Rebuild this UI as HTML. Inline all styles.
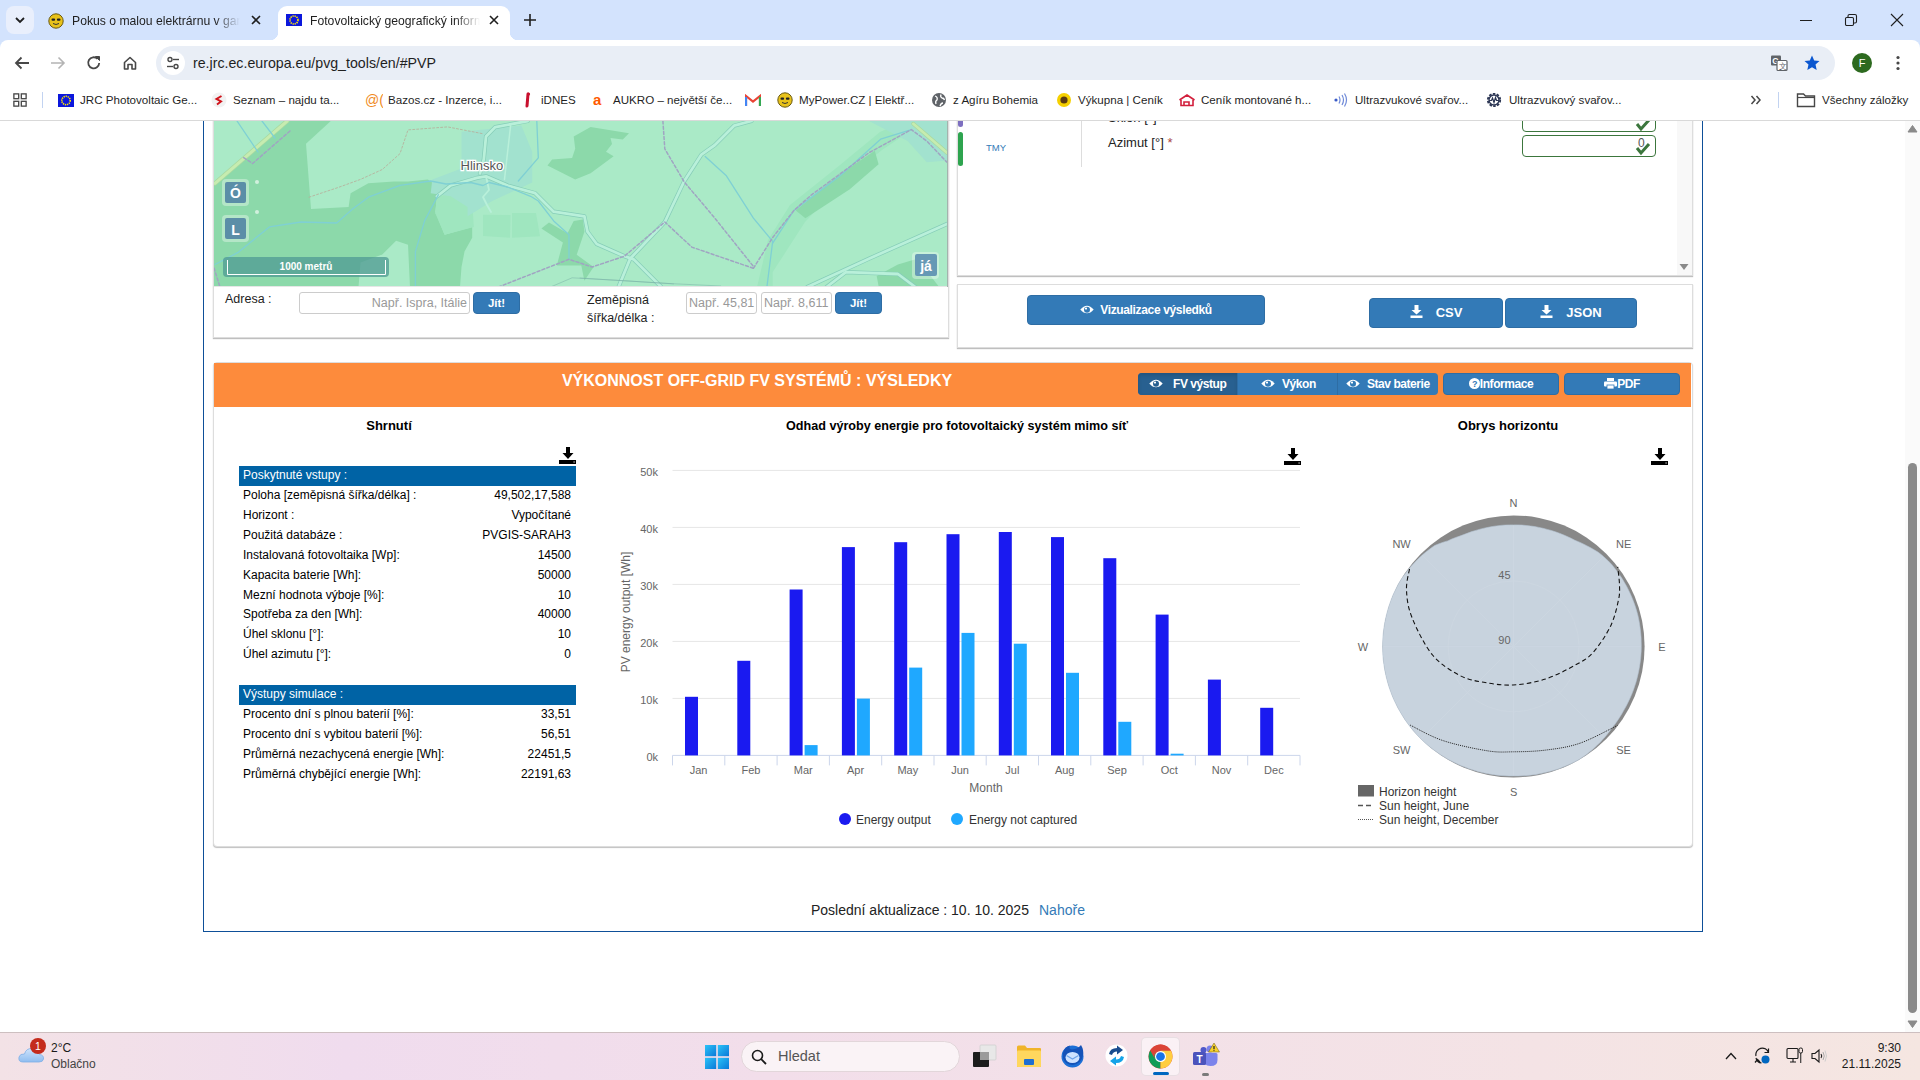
<!DOCTYPE html>
<html><head><meta charset="utf-8">
<style>
*{box-sizing:border-box;margin:0;padding:0}
html,body{width:1920px;height:1080px;overflow:hidden;background:#fff;font-family:"Liberation Sans",sans-serif;color:#000}
.a{position:absolute}
.nw{white-space:nowrap}
/* chrome */
#tabs{left:0;top:0;width:1920px;height:48px;background:#d3e3fd}
#toolbar{left:0;top:40px;width:1920px;height:40px;background:#fff;border-radius:8px 8px 0 0}
#bm{left:0;top:80px;width:1920px;height:41px;background:#fff;border-bottom:1px solid #d9d9d9}
#web{left:0;top:121px;width:1920px;height:911px;background:#fff;overflow:hidden}
#taskbar{left:0;top:1032px;width:1920px;height:48px;background:linear-gradient(90deg,#f3e2e6 0%,#f0dcee 18%,#f2deea 40%,#f3e1e8 60%,#f4e3e5 80%,#f5e6e1 100%);border-top:1px solid #cdbfc0}
.bmi{top:0;height:40px;font-size:11.6px;line-height:40px;color:#1f1f1f}
.panel{background:#fff;border:1px solid #ddd;box-shadow:0 1px 1px rgba(0,0,0,.25)}
.btn{background:#337ab7;border:1px solid #2e6da4;border-radius:4px;color:#fff;text-align:center}
.trow{left:0;width:337px;height:20px;font-size:12px;line-height:20px}
.trow .k{position:absolute;left:4px;top:-1px}
.trow .v{position:absolute;right:5px;top:-1px}
.thead{left:0;width:337px;height:20px;background:#0063a5;color:#fff;font-size:12px;line-height:18px;padding-left:4px}
.ax{font-size:11px;color:#666}
</style></head><body>
<div id="tabs" class="a">
 <div class="a" style="left:6px;top:6px;width:28px;height:28px;border-radius:8px;background:#e9effc"></div>
 <svg class="a" style="left:14px;top:14px" width="12" height="12" viewBox="0 0 12 12"><path d="M2 4 L6 8 L10 4" fill="none" stroke="#1f1f1f" stroke-width="1.8"/></svg>
 <svg class="a" style="left:48px;top:13px" width="16" height="16" viewBox="0 0 16 16"><circle cx="8" cy="8" r="7.2" fill="#e8c21a" stroke="#6b5a10" stroke-width="1"/><rect x="3.5" y="5.5" width="3.6" height="2.2" rx="1" fill="#222"/><rect x="8.9" y="5.5" width="3.6" height="2.2" rx="1" fill="#222"/><path d="M5 10.5 Q8 12.5 11 10.5" fill="none" stroke="#333" stroke-width="1"/></svg>
 <div class="a nw" style="left:72px;top:13px;font-size:12.2px;line-height:17px;color:#1f1f1f;width:168px;overflow:hidden;-webkit-mask-image:linear-gradient(90deg,#000 85%,transparent)">Pokus o malou elektrárnu v garáži</div>
 <svg class="a" style="left:250px;top:14px" width="12" height="12" viewBox="0 0 12 12"><path d="M2 2 L10 10 M10 2 L2 10" stroke="#1f1f1f" stroke-width="1.6"/></svg>
 <div class="a" style="left:278px;top:6px;width:232px;height:34px;background:#fff;border-radius:9px 9px 0 0"></div>
 <div class="a" style="left:270px;top:32px;width:8px;height:8px;background:radial-gradient(circle at 0 0,#d3e3fd 8px,#fff 8.5px)"></div>
 <div class="a" style="left:510px;top:32px;width:8px;height:8px;background:radial-gradient(circle at 8px 0,#d3e3fd 8px,#fff 8.5px)"></div>
 <svg class="a" style="left:286px;top:14px" width="16" height="12" viewBox="0 0 16 12"><rect width="16" height="12" fill="#0b17dc"/><circle cx="8" cy="6" r="4" fill="none" stroke="#ffe800" stroke-width="1.6" stroke-dasharray="1.3 0.8"/></svg>
 <div class="a nw" style="left:310px;top:13px;font-size:12.2px;line-height:17px;color:#1f1f1f;width:170px;overflow:hidden;-webkit-mask-image:linear-gradient(90deg,#000 85%,transparent)">Fotovoltaický geografický informační systém</div>
 <svg class="a" style="left:488px;top:14px" width="12" height="12" viewBox="0 0 12 12"><path d="M2 2 L10 10 M10 2 L2 10" stroke="#1f1f1f" stroke-width="1.6"/></svg>
 <svg class="a" style="left:523px;top:13px" width="14" height="14" viewBox="0 0 14 14"><path d="M7 1 V13 M1 7 H13" stroke="#1f1f1f" stroke-width="1.6"/></svg>
 <svg class="a" style="left:1799px;top:14px" width="14" height="14" viewBox="0 0 14 14"><path d="M1 6.5 H13" stroke="#1f1f1f" stroke-width="1"/></svg>
 <svg class="a" style="left:1844px;top:13px" width="14" height="14" viewBox="0 0 14 14"><rect x="1.5" y="4.5" width="8" height="8" rx="1.2" fill="none" stroke="#1f1f1f" stroke-width="1.1"/><path d="M4 4.5 V3 Q4 1.5 5.5 1.5 H11 Q12.5 1.5 12.5 3 V8.5 Q12.5 10 11 10 H9.5" fill="none" stroke="#1f1f1f" stroke-width="1.1"/></svg>
 <svg class="a" style="left:1890px;top:13px" width="14" height="14" viewBox="0 0 14 14"><path d="M1 1 L13 13 M13 1 L1 13" stroke="#1f1f1f" stroke-width="1.1"/></svg>
</div>
<div id="toolbar" class="a">
 <svg class="a" style="left:13px;top:15px" width="18" height="16" viewBox="0 0 18 16"><path d="M16 8 H3 M8.5 2.5 L3 8 L8.5 13.5" fill="none" stroke="#474747" stroke-width="1.8"/></svg>
 <svg class="a" style="left:49px;top:15px" width="18" height="16" viewBox="0 0 18 16"><path d="M2 8 H15 M9.5 2.5 L15 8 L9.5 13.5" fill="none" stroke="#b4b4b4" stroke-width="1.6"/></svg>
 <svg class="a" style="left:86px;top:15px" width="16" height="16" viewBox="0 0 16 16"><path d="M13.2 8 A5.5 5.5 0 1 1 11.5 3.8" fill="none" stroke="#474747" stroke-width="1.8"/><path d="M9.5 1.5 H13.5 V5.5 Z" fill="#474747" stroke="#474747" stroke-width="1"/></svg>
 <svg class="a" style="left:122px;top:15px" width="16" height="16" viewBox="0 0 16 16"><path d="M2.5 7.5 L8 2.5 L13.5 7.5 V14 H10 V9.5 H6 V14 H2.5 Z" fill="none" stroke="#474747" stroke-width="1.6" stroke-linejoin="round"/></svg>
 <div class="a" style="left:156px;top:6px;width:1679px;height:34px;border-radius:17px;background:#e9eef6"></div>
 <div class="a" style="left:161px;top:11px;width:24px;height:24px;border-radius:12px;background:#fff"></div>
 <svg class="a" style="left:165px;top:15px" width="16" height="16" viewBox="0 0 16 16"><circle cx="5" cy="4.5" r="2" fill="none" stroke="#474747" stroke-width="1.4"/><path d="M8 4.5 H14" stroke="#474747" stroke-width="1.4"/><path d="M2 11.5 H8" stroke="#474747" stroke-width="1.4"/><circle cx="11" cy="11.5" r="2" fill="none" stroke="#474747" stroke-width="1.4"/></svg>
 <div class="a nw" style="left:193px;top:14px;font-size:14.2px;line-height:18px;color:#1f1f1f">re.jrc.ec.europa.eu/pvg_tools/en/#PVP</div>
 <svg class="a" style="left:1770px;top:14px" width="18" height="18" viewBox="0 0 18 18"><rect x="1" y="1.5" width="10" height="10" rx="1" fill="#5f6368"/><text x="2.3" y="10" font-size="8.5" font-family="Liberation Sans" font-weight="700" fill="#fff">G</text><rect x="7" y="6.5" width="10" height="10" rx="1" fill="#fff" stroke="#5f6368" stroke-width="1.2"/><text x="9" y="15" font-size="8" font-family="Liberation Sans" fill="#5f6368">文</text></svg>
 <svg class="a" style="left:1803px;top:14px" width="18" height="18" viewBox="0 0 18 18"><path d="M9 1.5 L11.2 6.5 L16.5 7 L12.5 10.6 L13.7 16 L9 13.2 L4.3 16 L5.5 10.6 L1.5 7 L6.8 6.5 Z" fill="#0b57d0"/></svg>
 <div class="a" style="left:1852px;top:13px;width:20px;height:20px;border-radius:10px;background:#2d6a1f;color:#fff;font-size:11px;line-height:20px;text-align:center">F</div>
 <svg class="a" style="left:1895px;top:15px" width="6" height="16" viewBox="0 0 6 16"><circle cx="3" cy="2.5" r="1.6" fill="#474747"/><circle cx="3" cy="8" r="1.6" fill="#474747"/><circle cx="3" cy="13.5" r="1.6" fill="#474747"/></svg>
</div>
<div id="bm" class="a">
 <svg class="a" style="left:13px;top:13px" width="14" height="14" viewBox="0 0 16 16"><rect x="1" y="1" width="5.5" height="5.5" fill="none" stroke="#474747" stroke-width="1.5"/><rect x="9.5" y="1" width="5.5" height="5.5" fill="none" stroke="#474747" stroke-width="1.5"/><rect x="1" y="9.5" width="5.5" height="5.5" fill="none" stroke="#474747" stroke-width="1.5"/><rect x="9.5" y="9.5" width="5.5" height="5.5" fill="none" stroke="#474747" stroke-width="1.5"/></svg>
 <div class="a" style="left:42px;top:12px;width:1px;height:16px;background:#c2d3f1"></div>
 <div class="a" style="left:58px;top:0;height:40px;display:flex;align-items:center"><svg width="16" height="13" viewBox="0 0 16 13"><rect width="16" height="13" fill="#0b17dc"/><circle cx="8" cy="6.5" r="4.2" fill="none" stroke="#ffe800" stroke-width="1.6" stroke-dasharray="1.3 0.8"/></svg></div>
 <div class="a bmi nw" style="left:80px">JRC Photovoltaic Ge...</div>
 <div class="a" style="left:211px;top:0;height:40px;display:flex;align-items:center"><svg width="16" height="16" viewBox="0 0 16 16"><circle cx="8" cy="8" r="7.5" fill="#f2f2f2"/><path d="M10.5 4 L5.5 7 L10 9.5 L6 12.5" fill="none" stroke="#d0131b" stroke-width="2"/></svg></div>
 <div class="a bmi nw" style="left:233px">Seznam – najdu ta...</div>
 <div class="a" style="left:365px;top:0;height:40px;display:flex;align-items:center"><svg width="18" height="16" viewBox="0 0 18 16"><text x="0" y="13" font-size="14" font-family="Liberation Sans" fill="#f08a1c">@(</text></svg></div>
 <div class="a bmi nw" style="left:388px">Bazos.cz - Inzerce, i...</div>
 <div class="a" style="left:522px;top:0;height:40px;display:flex;align-items:center"><svg width="10" height="16" viewBox="0 0 10 16"><path d="M6 2 L5 14" stroke="#c8102e" stroke-width="3" stroke-linecap="round"/><circle cx="6.5" cy="2" r="1.6" fill="#c8102e"/></svg></div>
 <div class="a bmi nw" style="left:541px">iDNES</div>
 <div class="a" style="left:593px;top:0;height:40px;display:flex;align-items:center"><svg width="12" height="16" viewBox="0 0 12 16"><text x="0" y="13" font-size="15" font-weight="700" font-family="Liberation Sans" fill="#ff5a00">a</text></svg></div>
 <div class="a bmi nw" style="left:613px">AUKRO – největší če...</div>
 <div class="a" style="left:745px;top:0;height:40px;display:flex;align-items:center"><svg width="16" height="13" viewBox="0 0 16 13"><path d="M1 12 V2 L8 7.5 L15 2 V12" fill="none" stroke="#ea4335" stroke-width="2.2"/><path d="M1 12 V3" stroke="#4285f4" stroke-width="2.2"/><path d="M15 12 V3" stroke="#34a853" stroke-width="2.2"/></svg></div>
 <div class="a" style="left:777px;top:0;height:40px;display:flex;align-items:center"><svg width="16" height="16" viewBox="0 0 16 16"><circle cx="8" cy="8" r="7.2" fill="#e8c21a" stroke="#6b5a10" stroke-width="1"/><rect x="3.5" y="5.5" width="3.6" height="2.2" rx="1" fill="#222"/><rect x="8.9" y="5.5" width="3.6" height="2.2" rx="1" fill="#222"/><path d="M5 10.5 Q8 12.5 11 10.5" fill="none" stroke="#333" stroke-width="1"/></svg></div>
 <div class="a bmi nw" style="left:799px">MyPower.CZ | Elektř...</div>
 <div class="a" style="left:931px;top:0;height:40px;display:flex;align-items:center"><svg width="16" height="16" viewBox="0 0 16 16"><circle cx="8" cy="8" r="7" fill="#5f6368"/><path d="M4 4 Q7 5 6 8 Q4 9 5 12 M10 2.5 Q9 5 11 6 Q13 6 13.5 8 M9 14 Q10 11 12 11" fill="none" stroke="#fff" stroke-width="1.3"/></svg></div>
 <div class="a bmi nw" style="left:953px">z Agíru Bohemia</div>
 <div class="a" style="left:1056px;top:0;height:40px;display:flex;align-items:center"><svg width="16" height="16" viewBox="0 0 16 16"><circle cx="8" cy="8" r="7" fill="#f5d000"/><circle cx="8" cy="8" r="3.6" fill="#5a3a10"/></svg></div>
 <div class="a bmi nw" style="left:1078px">Výkupna | Ceník</div>
 <div class="a" style="left:1178px;top:0;height:40px;display:flex;align-items:center"><svg width="18" height="14" viewBox="0 0 18 14"><path d="M1.5 7 L9 2 L16.5 7 M3 6 V12.5 H15 V6 M6 12.5 V9 H11 V12.5" fill="none" stroke="#d21f3c" stroke-width="1.6"/></svg></div>
 <div class="a bmi nw" style="left:1201px">Ceník montované h...</div>
 <div class="a" style="left:1332px;top:0;height:40px;display:flex;align-items:center"><svg width="16" height="16" viewBox="0 0 16 16"><circle cx="4" cy="8" r="1.6" fill="#3a5bc7"/><path d="M7 4.5 Q9 8 7 11.5 M10 3 Q13 8 10 13 M12.5 1.5 Q16.5 8 12.5 14.5" fill="none" stroke="#6f8ad8" stroke-width="1.2"/></svg></div>
 <div class="a bmi nw" style="left:1355px">Ultrazvukové svařov...</div>
 <div class="a" style="left:1485px;top:0;height:40px;display:flex;align-items:center"><svg width="18" height="18" viewBox="0 0 18 18"><circle cx="9" cy="9" r="6.2" fill="none" stroke="#2b3553" stroke-width="1.8" stroke-dasharray="2.5 1.4"/><circle cx="9" cy="9" r="5" fill="none" stroke="#2b3553" stroke-width="1.4"/><path d="M4 9.5 H6.5 L7.5 7 L9 11.5 L10.5 6.5 L11.5 9.5 H14" fill="none" stroke="#2b3553" stroke-width="1.2"/></svg></div>
 <div class="a bmi nw" style="left:1509px">Ultrazvukový svařov...</div>
 <svg class="a" style="left:1750px;top:15px" width="12" height="10" viewBox="0 0 12 10"><path d="M1.5 1 L5 5 L1.5 9 M6.5 1 L10 5 L6.5 9" fill="none" stroke="#474747" stroke-width="1.5"/></svg>
 <div class="a" style="left:1778px;top:12px;width:1px;height:16px;background:#c2d3f1"></div>
 <svg class="a" style="left:1796px;top:12px" width="20" height="16" viewBox="0 0 20 16"><path d="M1.5 2 H7.5 L9.5 4 H18.5 V14.5 H1.5 Z" fill="none" stroke="#474747" stroke-width="1.4"/><path d="M1.5 5.5 H18.5" stroke="#474747" stroke-width="1.2"/></svg>
 <div class="a bmi nw" style="left:1822px">Všechny záložky</div>
</div>
<div id="web" class="a"><div class="a" style="left:0;top:-121px;width:1920px;height:1080px">
 <div class="a" style="left:203px;top:0;width:1500px;height:932px;border:1px solid #0e4f98;border-top:none"></div>
 <!-- map panel -->
 <div class="a panel" style="left:213px;top:60px;width:736px;height:278px"></div>
 <svg class="a" style="left:214px;top:121px" width="733" height="165" viewBox="214 121 733 165"><rect x="214" y="121" width="733" height="165" fill="#aaeac7"/><path d="M287.2 121.0 L330.8 121.0 L306.0 143.7 L311.0 209.0 L348.6 207.1 L350.6 193.2 L368.4 183.3 L394.0 181.4 L408.0 181.4 L427.8 179.4 L437.0 186.0 L437.0 196.3 L435.3 211.7 L444.6 234.7 L472.2 227.0 L472.2 237.8 L464.5 251.6 L461.5 267.0 L460.0 287.0 L410.0 287.0 L408.0 244.7 L396.1 240.8 L382.3 254.6 L360.5 262.6 L358.5 287.0 L214.0 287.0 L214.0 183.3 Z" fill="#8cd9aa" /><path d="M437.0 196.3 L466.0 191.7 L472.2 201.0 L473.8 227.0 L444.6 234.7 L435.3 213.2 Z" fill="#9fe6bf" /><path d="M483.0 214.7 L510.6 215.0 L510.0 237.8 L483.0 236.0 Z" fill="#9fe6bf" /><path d="M512.0 213.0 L536.0 213.0 L540.0 236.3 L512.0 237.8 Z" fill="#9fe6bf" /><path d="M461.5 131.8 L521.4 125.6 L532.2 151.7 L532.2 182.5 L492.2 200.9 L467.6 216.3 L467.6 207.0 L450.7 196.3 L430.7 193.2 L432.3 179.4 L461.5 168.6 Z" fill="#a2e2cf" /><path d="M541.4 228.6 L549.0 222.4 L567.5 233.2 L573.7 220.9 L582.9 219.4 L584.4 231.7 L576.7 254.7 L593.6 267.0 L584.4 280.8 L581.3 265.5 L556.8 265.5 L562.9 242.4 Z" fill="#8cd9aa" /><path d="M573.7 136.4 L590.6 127.1 L629.0 133.3 L622.8 139.4 L610.5 137.9 L612.0 144.0 L606.0 151.7 L613.6 156.3 L590.6 173.3 L575.2 179.4 L547.5 165.6 L552.1 159.4 L572.1 157.9 L575.2 148.7 Z" fill="#8cd9aa" /><path d="M757.3 286.0 L768.0 240.0 L790.0 205.0 L840.0 165.0 L880.0 132.0 L905.0 121.0 L925.0 121.0 L882.0 150.0 L845.0 180.0 L805.0 222.0 L772.7 272.1 L772.7 286.0 Z" fill="#9fe6bf" /><path d="M795.8 210.5 L840.1 173.9 L874.8 150.8 L878.6 164.2 L849.8 189.3 L805.4 218.2 Z" fill="#8cd9aa" /><path d="M876.7 276.0 L897.9 264.4 L917.2 258.7 L938.4 286.0 L878.6 286.0 Z" fill="#8cd9aa" /><path d="M869.0 121.0 L947.0 121.0 L947.0 160.4 L926.8 162.3 L907.6 141.1 Z" fill="#a2e2cf" /><path d="M437.0 196.3 L450.7 185.5 L476.8 177.9 L486.0 176.3 L507.6 185.5 L535.2 193.2 L553.7 211.7 L584.4 216.3 L587.5 231.7 L596.7 244.0 L624.4 256.2 L633.6 259.3 L661.3 287.0" fill="none" stroke="#86cdb8" stroke-width="4.2" stroke-linejoin="round" stroke-linecap="round" /><path d="M480.0 173.3 L483.8 159.4 L486.0 136.4 L495.3 127.1 L527.6 121.0" fill="none" stroke="#86cdb8" stroke-width="4.2" stroke-linejoin="round" stroke-linecap="round" /><path d="M751.5 121.0 L734.1 125.7 L714.9 145.0 L701.4 154.6 L684.0 181.6 L664.8 222.0 L630.1 258.7 L618.5 287.0" fill="none" stroke="#86cdb8" stroke-width="4.2" stroke-linejoin="round" stroke-linecap="round" /><path d="M807.4 287.0 L869.0 258.7 L947.0 224.0" fill="none" stroke="#86cdb8" stroke-width="4.2" stroke-linejoin="round" stroke-linecap="round" /><path d="M826.6 287.0 L845.9 272.1 L897.9 274.0 L915.3 287.0" fill="none" stroke="#86cdb8" stroke-width="4.2" stroke-linejoin="round" stroke-linecap="round" /><path d="M437.0 196.3 L450.7 185.5 L476.8 177.9 L486.0 176.3 L507.6 185.5 L535.2 193.2 L553.7 211.7 L584.4 216.3 L587.5 231.7 L596.7 244.0 L624.4 256.2 L633.6 259.3 L661.3 287.0" fill="none" stroke="#b9f0da" stroke-width="2.8" stroke-linejoin="round" stroke-linecap="round" /><path d="M480.0 173.3 L483.8 159.4 L486.0 136.4 L495.3 127.1 L527.6 121.0" fill="none" stroke="#b9f0da" stroke-width="2.8" stroke-linejoin="round" stroke-linecap="round" /><path d="M751.5 121.0 L734.1 125.7 L714.9 145.0 L701.4 154.6 L684.0 181.6 L664.8 222.0 L630.1 258.7 L618.5 287.0" fill="none" stroke="#b9f0da" stroke-width="2.8" stroke-linejoin="round" stroke-linecap="round" /><path d="M807.4 287.0 L869.0 258.7 L947.0 224.0" fill="none" stroke="#b9f0da" stroke-width="2.8" stroke-linejoin="round" stroke-linecap="round" /><path d="M826.6 287.0 L845.9 272.1 L897.9 274.0 L915.3 287.0" fill="none" stroke="#b9f0da" stroke-width="2.8" stroke-linejoin="round" stroke-linecap="round" /><path d="M510.6 125.6 L504.5 179.4" fill="none" stroke="#b9f0da" stroke-width="1.5" stroke-linejoin="round" stroke-linecap="round" /><path d="M486.0 176.3 L489.0 190.0 L483.0 197.0 L487.0 205.0 L491.0 212.0" fill="none" stroke="#b9f0da" stroke-width="1.8" stroke-linejoin="round" stroke-linecap="round" /><path d="M215.0 183.3 L287.2 121.0" fill="none" stroke="#a9d9a0" stroke-width="4.5" stroke-linejoin="round" stroke-linecap="round" /><path d="M215.0 183.3 L287.2 121.0" fill="none" stroke="#c6ecb0" stroke-width="3" stroke-linejoin="round" stroke-linecap="round" /><path d="M913.3 123.8 L947.0 152.7" fill="none" stroke="#a9d9a0" stroke-width="4" stroke-linejoin="round" stroke-linecap="round" /><path d="M913.3 123.8 L947.0 152.7" fill="none" stroke="#c6ecb0" stroke-width="2.6" stroke-linejoin="round" stroke-linecap="round" /><path d="M215.0 264.5 L237.7 252.7 L269.4 226.9 L301.1 222.0 L336.7 223.0 L352.6 209.1 L368.4 197.2 L400.0 185.3 L430.7 181.0 L446.0 184.0 L470.7 182.5 L483.0 185.5 L489.1 182.5 L507.6 187.0 L530.6 196.3 L538.3 201.0 L553.7 220.9 L569.0 234.7 L569.0 259.3" fill="none" stroke="#7fd0d4" stroke-width="1.3" stroke-linejoin="round" stroke-linecap="round" /><path d="M536.8 121.0 L538.3 157.9 L518.3 181.0" fill="none" stroke="#7fd0d4" stroke-width="1.3" stroke-linejoin="round" stroke-linecap="round" /><path d="M438.4 194.8 L424.6 220.9 L415.4 251.6 L415.4 287.0" fill="none" stroke="#7fd0d4" stroke-width="1.3" stroke-linejoin="round" stroke-linecap="round" /><path d="M705.2 156.5 L726.4 175.8 L753.4 218.2 L772.7 241.3 L766.9 287.0" fill="none" stroke="#7fd0d4" stroke-width="1.3" stroke-linejoin="round" stroke-linecap="round" /><path d="M772.7 243.2 L793.9 210.5 L840.1 175.8 L880.6 139.2 L911.4 129.6" fill="none" stroke="#7fd0d4" stroke-width="1.3" stroke-linejoin="round" stroke-linecap="round" /><path d="M237.0 121.0 L258.0 152.0" fill="none" stroke="#7fd0d4" stroke-width="1.3" stroke-linejoin="round" stroke-linecap="round" /><path d="M262.0 121.0 L275.0 138.0" fill="none" stroke="#7fd0d4" stroke-width="1.3" stroke-linejoin="round" stroke-linecap="round" /><path d="M662.9 121.0 L664.8 148.8 L684.0 181.6 L714.9 218.2 L753.4 266.4" fill="none" stroke="#a0a4c2" stroke-width="1.5" stroke-linejoin="round" stroke-linecap="round" stroke-dasharray="3 2.2"/><path d="M498.4 287.0 L569.0 259.3 L592.1 267.0 L624.4 256.2 L664.8 222.0 L691.8 247.1 L753.4 268.3" fill="none" stroke="#a0a4c2" stroke-width="1.5" stroke-linejoin="round" stroke-linecap="round" stroke-dasharray="3 2.2"/><path d="M753.4 268.3 L772.7 237.5 L793.9 210.5 L811.2 195.1 L869.0 152.7 L911.4 129.6 L926.8 141.1 L947.0 162.3" fill="none" stroke="#a0a4c2" stroke-width="1.5" stroke-linejoin="round" stroke-linecap="round" stroke-dasharray="3 2.2"/><path d="M243.7 157.6 L252.6 163.5 L291.2 129.9" fill="none" stroke="#a0a4c2" stroke-width="1.5" stroke-linejoin="round" stroke-linecap="round" stroke-dasharray="3 2.2"/><path d="M214.0 268.0 L220.0 287.0" fill="none" stroke="#a0a4c2" stroke-width="1.5" stroke-linejoin="round" stroke-linecap="round" stroke-dasharray="3 2.2"/><path d="M309.0 197.2 L338.7 187.3 L360.5 179.4 L382.3 169.5 L400.0 153.6 L408.0 129.9 L447.6 126.9 L483.3 133.8" fill="none" stroke="#b8ab98" stroke-width="0.8" stroke-linejoin="round" stroke-linecap="round" stroke-dasharray="2 2"/><path d="M580.0 278.0 L624.3 280.8 L672.5 283.7 L720.7 286.0" fill="none" stroke="#78b0a6" stroke-width="0.5" stroke-linejoin="round" stroke-linecap="round" /><path d="M550.6 287.0 L572.1 277.8 L625.9 280.8 L673.5 283.9" fill="none" stroke="#78b0a6" stroke-width="0.5" stroke-linejoin="round" stroke-linecap="round" /><text x="460.5" y="170" font-family="Liberation Sans" font-size="13" fill="#555" stroke="#fff" stroke-width="2.5" paint-order="stroke">Hlinsko</text><rect x="223" y="257" width="166" height="20" rx="4" fill="#4f9a93" opacity=".75"/>
  <path d="M227.5 260 V274.5 H385.5 V260" fill="none" stroke="#fff" stroke-width="1"/>
  <text x="306" y="270" text-anchor="middle" font-family="Liberation Sans" font-size="10" font-weight="700" fill="#fff">1000 metrů</text>
  <rect x="222" y="179" width="27" height="27" rx="4" fill="#fff" opacity=".35"/>
  <rect x="225" y="182" width="21" height="21" rx="2" fill="#5b8ea7"/>
  <text x="235.5" y="198" text-anchor="middle" font-family="Liberation Sans" font-size="14" font-weight="700" fill="#fff">Ó</text>
  <rect x="222" y="215" width="27" height="27" rx="4" fill="#fff" opacity=".35"/>
  <rect x="225" y="218" width="21" height="21" rx="2" fill="#5b8ea7"/>
  <text x="235.5" y="234.5" text-anchor="middle" font-family="Liberation Sans" font-size="14" font-weight="700" fill="#fff">L</text>
  <circle cx="257" cy="182" r="2" fill="#fff" opacity=".6"/><circle cx="257" cy="212" r="2" fill="#fff" opacity=".6"/>
  <rect x="912" y="252" width="27" height="27" rx="4" fill="#fff" opacity=".35"/>
  <rect x="915" y="254" width="22" height="22" rx="2" fill="#6699b5"/>
  <text x="926" y="271" text-anchor="middle" font-family="Liberation Sans" font-size="14" font-weight="700" fill="#fff">já</text>
 </svg>
 <div class="a" style="left:214px;top:286px;width:734px;height:1px;background:#e6e6e6"></div>
 <div class="a" style="left:947px;top:121px;width:1px;height:166px;background:#a3b3ad"></div>
 <div class="a nw" style="left:225px;top:292px;font-size:12.5px;line-height:15px;color:#222">Adresa :</div>
 <div class="a" style="left:299px;top:292px;width:171px;height:22px;border:1px solid #ccc;border-radius:3px"></div>
 <div class="a nw" style="left:300px;top:295px;width:167px;text-align:right;font-size:12.5px;line-height:16px;color:#999">Např. Ispra, Itálie</div>
 <div class="a btn nw" style="left:473px;top:292px;width:47px;height:22px;font-size:11.5px;line-height:20px;font-weight:700">Jít!</div>
 <div class="a nw" style="left:587px;top:291px;font-size:12.5px;line-height:18px;color:#222">Zeměpisná<br>šířka/délka :</div>
 <div class="a" style="left:686px;top:292px;width:71px;height:22px;border:1px solid #ccc;border-radius:3px"></div>
 <div class="a nw" style="left:689px;top:295px;font-size:12.5px;line-height:16px;color:#999">Např. 45,81</div>
 <div class="a" style="left:761px;top:292px;width:71px;height:22px;border:1px solid #ccc;border-radius:3px"></div>
 <div class="a nw" style="left:764px;top:295px;font-size:12.5px;line-height:16px;color:#999">Např. 8,611</div>
 <div class="a btn nw" style="left:835px;top:292px;width:47px;height:22px;font-size:11.5px;line-height:20px;font-weight:700">Jít!</div>
 <!-- right panel 1 -->
 <div class="a panel" style="left:957px;top:60px;width:736px;height:216px"></div>
 <div class="a" style="left:958px;top:100px;width:5px;height:27px;background:#7d6fc0;border-radius:0 0 3px 3px"></div>
 <div class="a" style="left:958px;top:132px;width:5px;height:34px;background:#2ea44f;border-radius:3px"></div>
 <div class="a nw" style="left:986px;top:142px;font-size:9.5px;line-height:11px;color:#337ab7">TMY</div>
 <div class="a" style="left:1081px;top:100px;width:1px;height:67px;background:#ddd"></div>
 <div class="a nw" style="left:1108px;top:110px;font-size:13px;line-height:15px;color:#222">Sklon [°] <span style="color:#a94442">*</span></div>
 <div class="a nw" style="left:1108px;top:135px;font-size:13px;line-height:15px;color:#222">Azimut [°] <span style="color:#a94442">*</span></div>
 <div class="a" style="left:1522px;top:100px;width:134px;height:32px;border:1px solid #3c763d;border-radius:4px"></div>
 <div class="a" style="left:1522px;top:135px;width:134px;height:22px;border:1px solid #3c763d;border-radius:4px"></div>
 <svg class="a" style="left:1634px;top:115px" width="18" height="18" viewBox="0 0 18 18"><path d="M3 9 L7 14 L15 5" fill="none" stroke="#3c763d" stroke-width="3"/></svg>
 <svg class="a" style="left:1634px;top:139px" width="18" height="18" viewBox="0 0 18 18"><path d="M3 9 L7 14 L15 5" fill="none" stroke="#3c763d" stroke-width="3"/></svg>
 <div class="a nw" style="left:1638px;top:136px;font-size:12px;line-height:14px;color:#555">0</div>
 <div class="a" style="left:1677px;top:100px;width:15px;height:175px;background:#f8f8f8"></div>
 <svg class="a" style="left:1679px;top:263px" width="10" height="8" viewBox="0 0 10 8"><path d="M0.5 1 H9.5 L5 7 Z" fill="#8a8a8a"/></svg>
 <!-- right panel 2 -->
 <div class="a panel" style="left:957px;top:284px;width:736px;height:64px"></div>
 <div class="a btn nw" style="left:1027px;top:295px;width:238px;height:30px;font-size:12px;line-height:28px;font-weight:700;letter-spacing:-.35px"><svg width="14" height="11" viewBox="0 0 14 11" style="vertical-align:-1px;margin-right:6px"><path d="M0.3 5.5 Q7 -2.2 13.7 5.5 Q7 13.2 0.3 5.5 Z" fill="#fff"/><circle cx="7" cy="5.8" r="3" fill="#337ab7"/><circle cx="6" cy="4.6" r="1.1" fill="#fff"/></svg>Vizualizace výsledků</div>
 <div class="a btn nw" style="left:1369px;top:298px;width:134px;height:30px;font-size:13px;line-height:28px;font-weight:700"><svg width="13" height="13" viewBox="0 0 13 13" style="vertical-align:-1px;margin-right:13px"><path d="M4.5 0 H8.5 V5 H11.5 L6.5 9.5 L1.5 5 H4.5 Z" fill="#fff"/><rect x="0.5" y="10.5" width="12" height="2.5" fill="#fff"/></svg>CSV</div>
 <div class="a btn nw" style="left:1505px;top:298px;width:132px;height:30px;font-size:13px;line-height:28px;font-weight:700"><svg width="13" height="13" viewBox="0 0 13 13" style="vertical-align:-1px;margin-right:13px"><path d="M4.5 0 H8.5 V5 H11.5 L6.5 9.5 L1.5 5 H4.5 Z" fill="#fff"/><rect x="0.5" y="10.5" width="12" height="2.5" fill="#fff"/></svg>JSON</div>
 <!-- results panel -->
 <div class="a panel" style="left:213px;top:362px;width:1480px;height:485px;border-radius:4px"></div>
 <div class="a" style="left:214px;top:363px;width:1477px;height:44px;background:#fd8b3c"></div>
 <div class="a nw" style="left:214px;top:371px;width:1086px;text-align:center;font-size:16px;line-height:20px;font-weight:700;color:#fff">VÝKONNOST OFF-GRID FV SYSTÉMŮ : VÝSLEDKY</div>
 <div class="a" style="left:1138px;top:373px;width:300px;height:22px;border-radius:4px;background:#337ab7;overflow:hidden">
  <div class="a" style="left:0;top:0;width:100px;height:22px;background:#286090;box-shadow:inset 0 2px 4px rgba(0,0,0,.15)"></div>
  <div class="a" style="left:99px;top:0;width:1px;height:22px;background:#2e6da4"></div><div class="a" style="left:199px;top:0;width:1px;height:22px;background:#2e6da4"></div>
  <div class="a nw" style="left:11px;top:0;line-height:22px;font-size:12px;font-weight:700;color:#fff;letter-spacing:-.45px"><svg width="14" height="11" viewBox="0 0 14 11" style="vertical-align:-1px"><path d="M0.3 5.5 Q7 -2.2 13.7 5.5 Q7 13.2 0.3 5.5 Z" fill="#fff"/><circle cx="7" cy="5.8" r="3" fill="#286090"/><circle cx="6" cy="4.6" r="1.1" fill="#fff"/></svg><span style="margin-left:10px">FV výstup</span></div>
  <div class="a nw" style="left:123px;top:0;line-height:22px;font-size:12px;font-weight:700;color:#fff;letter-spacing:-.45px"><svg width="14" height="11" viewBox="0 0 14 11" style="vertical-align:-1px"><path d="M0.3 5.5 Q7 -2.2 13.7 5.5 Q7 13.2 0.3 5.5 Z" fill="#fff"/><circle cx="7" cy="5.8" r="3" fill="#337ab7"/><circle cx="6" cy="4.6" r="1.1" fill="#fff"/></svg><span style="margin-left:7px">Výkon</span></div>
  <div class="a nw" style="left:208px;top:0;line-height:22px;font-size:12px;font-weight:700;color:#fff;letter-spacing:-.45px"><svg width="14" height="11" viewBox="0 0 14 11" style="vertical-align:-1px"><path d="M0.3 5.5 Q7 -2.2 13.7 5.5 Q7 13.2 0.3 5.5 Z" fill="#fff"/><circle cx="7" cy="5.8" r="3" fill="#337ab7"/><circle cx="6" cy="4.6" r="1.1" fill="#fff"/></svg><span style="margin-left:7px">Stav baterie</span></div>
 </div>
 <div class="a btn nw" style="left:1443px;top:373px;width:116px;height:22px;font-size:12px;line-height:20px;font-weight:700;letter-spacing:-.45px"><svg width="11" height="11" viewBox="0 0 11 11" style="vertical-align:-1px"><circle cx="5.5" cy="5.5" r="5.5" fill="#fff"/><text x="5.5" y="9" text-anchor="middle" font-family="Liberation Sans" font-size="9" font-weight="700" fill="#337ab7">?</text></svg>Informace</div>
 <div class="a btn nw" style="left:1564px;top:373px;width:116px;height:22px;font-size:12px;line-height:20px;font-weight:700;letter-spacing:-.45px"><svg width="13" height="11" viewBox="0 0 13 11" style="vertical-align:-1px"><rect x="3" y="0" width="7" height="3" fill="#fff"/><rect x="0" y="3.5" width="13" height="5" rx="1" fill="#fff"/><rect x="3" y="7" width="7" height="4" fill="#fff" stroke="#337ab7" stroke-width=".8"/></svg>PDF</div>
 <div class="a nw" style="left:289px;top:418px;width:200px;text-align:center;font-size:13px;line-height:16px;font-weight:700;color:#000">Shrnutí</div>
 <div class="a nw" style="left:707px;top:418px;width:500px;text-align:center;font-size:12.6px;line-height:16px;font-weight:700;color:#000">Odhad výroby energie pro fotovoltaický systém mimo síť</div>
 <div class="a nw" style="left:1408px;top:418px;width:200px;text-align:center;font-size:13px;line-height:16px;font-weight:700;color:#000">Obrys horizontu</div>
 <svg class="a" style="left:559px;top:447px" width="17" height="17" viewBox="0 0 17 17"><path d="M7 0 H11 V6 H14.5 L9 12 L3.5 6 H7 Z" fill="#000"/><rect x="0" y="13" width="17" height="4" fill="#000"/><rect x="14.5" y="14.5" width="1.2" height="1" fill="#fff"/></svg>
 <svg class="a" style="left:1284px;top:448px" width="17" height="17" viewBox="0 0 17 17"><path d="M7 0 H11 V6 H14.5 L9 12 L3.5 6 H7 Z" fill="#000"/><rect x="0" y="13" width="17" height="4" fill="#000"/><rect x="14.5" y="14.5" width="1.2" height="1" fill="#fff"/></svg>
 <svg class="a" style="left:1651px;top:448px" width="17" height="17" viewBox="0 0 17 17"><path d="M7 0 H11 V6 H14.5 L9 12 L3.5 6 H7 Z" fill="#000"/><rect x="0" y="13" width="17" height="4" fill="#000"/><rect x="14.5" y="14.5" width="1.2" height="1" fill="#fff"/></svg>
 <div class="a" style="left:239px;top:466px;width:337px;height:330px">
  <div class="a thead nw" style="top:0">Poskytnuté vstupy :</div>
  <div class="a trow nw" style="top:20.0px"><span class="k">Poloha [zeměpisná šířka/délka] :</span><span class="v">49,502,17,588</span></div>
  <div class="a trow nw" style="top:39.9px"><span class="k">Horizont :</span><span class="v">Vypočítané</span></div>
  <div class="a trow nw" style="top:59.8px"><span class="k">Použitá databáze :</span><span class="v">PVGIS-SARAH3</span></div>
  <div class="a trow nw" style="top:79.7px"><span class="k">Instalovaná fotovoltaika [Wp]:</span><span class="v">14500</span></div>
  <div class="a trow nw" style="top:99.6px"><span class="k">Kapacita baterie [Wh]:</span><span class="v">50000</span></div>
  <div class="a trow nw" style="top:119.5px"><span class="k">Mezní hodnota výboje [%]:</span><span class="v">10</span></div>
  <div class="a trow nw" style="top:139.4px"><span class="k">Spotřeba za den [Wh]:</span><span class="v">40000</span></div>
  <div class="a trow nw" style="top:159.3px"><span class="k">Úhel sklonu [°]:</span><span class="v">10</span></div>
  <div class="a trow nw" style="top:179.2px"><span class="k">Úhel azimutu [°]:</span><span class="v">0</span></div>
  <div class="a thead nw" style="top:219px">Výstupy simulace :</div>
  <div class="a trow nw" style="top:239.0px"><span class="k">Procento dní s plnou baterií [%]:</span><span class="v">33,51</span></div>
  <div class="a trow nw" style="top:258.9px"><span class="k">Procento dní s vybitou baterií [%]:</span><span class="v">56,51</span></div>
  <div class="a trow nw" style="top:278.8px"><span class="k">Průměrná nezachycená energie [Wh]:</span><span class="v">22451,5</span></div>
  <div class="a trow nw" style="top:298.7px"><span class="k">Průměrná chybějící energie [Wh]:</span><span class="v">22191,63</span></div>
 </div>
 <svg class="a" style="left:600px;top:440px" width="720" height="400" viewBox="600 440 720 400"><text x="658" y="760.9" text-anchor="end" font-family="Liberation Sans" font-size="11" fill="#666">0k</text><path d="M672.5 698.4 H1300" stroke="#e6e6e6" stroke-width="1"/><text x="658" y="703.9" text-anchor="end" font-family="Liberation Sans" font-size="11" fill="#666">10k</text><path d="M672.5 641.4 H1300" stroke="#e6e6e6" stroke-width="1"/><text x="658" y="646.9" text-anchor="end" font-family="Liberation Sans" font-size="11" fill="#666">20k</text><path d="M672.5 584.4 H1300" stroke="#e6e6e6" stroke-width="1"/><text x="658" y="589.9" text-anchor="end" font-family="Liberation Sans" font-size="11" fill="#666">30k</text><path d="M672.5 527.4 H1300" stroke="#e6e6e6" stroke-width="1"/><text x="658" y="532.9" text-anchor="end" font-family="Liberation Sans" font-size="11" fill="#666">40k</text><path d="M672.5 470.4 H1300" stroke="#e6e6e6" stroke-width="1"/><text x="658" y="475.9" text-anchor="end" font-family="Liberation Sans" font-size="11" fill="#666">50k</text><path d="M672.5 755.4 H1300" stroke="#ccd6eb" stroke-width="1"/><path d="M672.5 755.4 V765.4" stroke="#ccd6eb" stroke-width="1"/><path d="M724.8 755.4 V765.4" stroke="#ccd6eb" stroke-width="1"/><path d="M777.1 755.4 V765.4" stroke="#ccd6eb" stroke-width="1"/><path d="M829.4 755.4 V765.4" stroke="#ccd6eb" stroke-width="1"/><path d="M881.7 755.4 V765.4" stroke="#ccd6eb" stroke-width="1"/><path d="M934.0 755.4 V765.4" stroke="#ccd6eb" stroke-width="1"/><path d="M986.2 755.4 V765.4" stroke="#ccd6eb" stroke-width="1"/><path d="M1038.5 755.4 V765.4" stroke="#ccd6eb" stroke-width="1"/><path d="M1090.8 755.4 V765.4" stroke="#ccd6eb" stroke-width="1"/><path d="M1143.1 755.4 V765.4" stroke="#ccd6eb" stroke-width="1"/><path d="M1195.4 755.4 V765.4" stroke="#ccd6eb" stroke-width="1"/><path d="M1247.7 755.4 V765.4" stroke="#ccd6eb" stroke-width="1"/><path d="M1300.0 755.4 V765.4" stroke="#ccd6eb" stroke-width="1"/><text x="698.6" y="774" text-anchor="middle" font-family="Liberation Sans" font-size="11" fill="#666">Jan</text><rect x="685.0" y="696.8" width="13" height="58.6" fill="#1a1af0"/><text x="750.9" y="774" text-anchor="middle" font-family="Liberation Sans" font-size="11" fill="#666">Feb</text><rect x="737.3" y="660.8" width="13" height="94.6" fill="#1a1af0"/><text x="803.2" y="774" text-anchor="middle" font-family="Liberation Sans" font-size="11" fill="#666">Mar</text><rect x="789.6" y="589.5" width="13" height="165.9" fill="#1a1af0"/><rect x="804.6" y="745.1" width="13" height="10.3" fill="#1fa8ff"/><text x="855.5" y="774" text-anchor="middle" font-family="Liberation Sans" font-size="11" fill="#666">Apr</text><rect x="841.9" y="547.1" width="13" height="208.3" fill="#1a1af0"/><rect x="856.9" y="698.6" width="13" height="56.8" fill="#1fa8ff"/><text x="907.8" y="774" text-anchor="middle" font-family="Liberation Sans" font-size="11" fill="#666">May</text><rect x="894.2" y="542.2" width="13" height="213.2" fill="#1a1af0"/><rect x="909.2" y="667.6" width="13" height="87.8" fill="#1fa8ff"/><text x="960.1" y="774" text-anchor="middle" font-family="Liberation Sans" font-size="11" fill="#666">Jun</text><rect x="946.5" y="534.2" width="13" height="221.2" fill="#1a1af0"/><rect x="961.5" y="632.9" width="13" height="122.5" fill="#1fa8ff"/><text x="1012.4" y="774" text-anchor="middle" font-family="Liberation Sans" font-size="11" fill="#666">Jul</text><rect x="998.8" y="532.0" width="13" height="223.4" fill="#1a1af0"/><rect x="1013.8" y="643.7" width="13" height="111.7" fill="#1fa8ff"/><text x="1064.7" y="774" text-anchor="middle" font-family="Liberation Sans" font-size="11" fill="#666">Aug</text><rect x="1051.0" y="537.1" width="13" height="218.3" fill="#1a1af0"/><rect x="1066.0" y="672.8" width="13" height="82.7" fill="#1fa8ff"/><text x="1117.0" y="774" text-anchor="middle" font-family="Liberation Sans" font-size="11" fill="#666">Sep</text><rect x="1103.3" y="558.2" width="13" height="197.2" fill="#1a1af0"/><rect x="1118.3" y="721.8" width="13" height="33.6" fill="#1fa8ff"/><text x="1169.3" y="774" text-anchor="middle" font-family="Liberation Sans" font-size="11" fill="#666">Oct</text><rect x="1155.6" y="614.6" width="13" height="140.8" fill="#1a1af0"/><rect x="1170.6" y="753.7" width="13" height="1.7" fill="#1fa8ff"/><text x="1221.6" y="774" text-anchor="middle" font-family="Liberation Sans" font-size="11" fill="#666">Nov</text><rect x="1207.9" y="679.6" width="13" height="75.8" fill="#1a1af0"/><text x="1273.9" y="774" text-anchor="middle" font-family="Liberation Sans" font-size="11" fill="#666">Dec</text><rect x="1260.2" y="707.8" width="13" height="47.6" fill="#1a1af0"/><text x="986" y="792" text-anchor="middle" font-family="Liberation Sans" font-size="12" fill="#666">Month</text><text transform="translate(630 612) rotate(-90)" text-anchor="middle" font-family="Liberation Sans" font-size="12" fill="#666">PV energy output [Wh]</text><circle cx="845" cy="819" r="6" fill="#1a1af0"/><text x="856" y="824" font-family="Liberation Sans" font-size="12" fill="#333">Energy output</text><circle cx="957" cy="819" r="6" fill="#1fa8ff"/><text x="969" y="824" font-family="Liberation Sans" font-size="12" fill="#333">Energy not captured</text></svg>
 <svg class="a" style="left:1340px;top:480px" width="350" height="360" viewBox="1340 480 350 360"><circle cx="1513.6" cy="646.4" r="131.0" fill="#888"/><path d="M1513.6 524.9 L1517.8 524.9 L1522.1 525.1 L1526.3 525.5 L1530.5 526.0 L1534.7 526.6 L1538.9 527.4 L1543.0 528.3 L1547.2 529.4 L1551.3 530.5 L1555.3 531.8 L1559.3 533.2 L1563.3 534.8 L1567.2 536.5 L1571.1 538.3 L1574.9 540.3 L1578.9 541.9 L1582.8 543.7 L1586.7 545.7 L1590.7 547.8 L1594.5 550.0 L1598.3 552.3 L1601.8 555.1 L1605.1 558.0 L1608.4 561.1 L1611.5 564.3 L1614.3 567.7 L1617.0 571.3 L1619.6 574.9 L1622.1 578.6 L1624.4 582.4 L1626.6 586.3 L1628.6 590.3 L1630.5 594.3 L1632.3 598.4 L1633.9 602.6 L1635.4 606.8 L1636.7 611.1 L1637.9 615.4 L1638.8 619.8 L1639.6 624.2 L1640.2 628.6 L1640.7 633.0 L1641.1 637.5 L1641.2 641.9 L1641.3 646.4 L1641.2 650.9 L1640.9 655.3 L1640.5 659.7 L1639.9 664.2 L1639.2 668.5 L1638.3 672.9 L1637.3 677.2 L1636.2 681.5 L1634.8 685.8 L1633.4 690.0 L1631.8 694.1 L1630.0 698.2 L1628.1 702.2 L1626.1 706.2 L1623.9 710.1 L1621.7 714.0 L1619.4 717.7 L1616.9 721.5 L1614.3 725.1 L1611.6 728.6 L1608.9 732.2 L1606.1 735.7 L1603.1 739.1 L1600.1 742.4 L1596.9 745.6 L1593.5 748.7 L1590.0 751.6 L1586.4 754.4 L1582.7 757.0 L1579.0 759.6 L1574.9 761.7 L1570.8 763.7 L1566.7 765.6 L1562.4 767.3 L1558.2 768.9 L1553.8 770.3 L1549.5 771.5 L1545.1 772.6 L1540.6 773.6 L1536.2 774.4 L1531.7 775.0 L1527.2 775.5 L1522.6 775.8 L1518.1 775.9 L1513.6 775.9 L1509.1 775.9 L1504.6 775.7 L1500.0 775.4 L1495.5 774.9 L1491.1 774.3 L1486.6 773.5 L1482.2 772.5 L1477.8 771.4 L1473.4 770.1 L1469.1 768.7 L1464.8 767.1 L1460.6 765.4 L1456.5 763.5 L1452.4 761.5 L1448.4 759.4 L1444.4 757.1 L1440.6 754.7 L1436.8 752.1 L1433.1 749.4 L1429.5 746.6 L1426.0 743.7 L1422.6 740.6 L1419.4 737.4 L1416.2 734.1 L1413.2 730.6 L1410.4 727.1 L1407.6 723.4 L1405.0 719.7 L1402.5 715.8 L1400.2 711.9 L1397.9 707.9 L1395.9 703.8 L1393.9 699.7 L1392.1 695.5 L1390.5 691.2 L1389.0 686.9 L1387.7 682.5 L1386.5 678.1 L1385.5 673.6 L1384.6 669.1 L1383.9 664.6 L1383.3 660.1 L1382.9 655.5 L1382.7 651.0 L1382.6 646.4 L1382.7 641.8 L1382.9 637.3 L1383.3 632.7 L1383.9 628.2 L1384.6 623.7 L1385.5 619.2 L1386.5 614.7 L1387.7 610.3 L1389.0 605.9 L1390.5 601.6 L1392.1 597.3 L1393.9 593.1 L1395.9 589.0 L1397.9 584.9 L1400.2 580.9 L1402.7 577.1 L1405.4 573.4 L1408.2 569.8 L1411.1 566.3 L1414.2 563.0 L1417.3 559.7 L1420.6 556.6 L1424.0 553.6 L1427.5 550.8 L1431.1 548.1 L1434.7 545.5 L1439.0 543.8 L1443.3 542.2 L1447.7 540.9 L1451.7 539.1 L1455.7 537.5 L1459.8 536.1 L1463.8 534.6 L1467.8 533.1 L1471.8 531.6 L1475.9 530.4 L1480.0 529.2 L1484.1 528.2 L1488.3 527.3 L1492.5 526.5 L1496.7 525.9 L1500.9 525.4 L1505.1 525.1 L1509.4 524.9 Z" fill="#c8d3de" stroke="#b5c4d3" stroke-width="0.6"/><circle cx="1513.6" cy="646.4" r="65.5" fill="none" stroke="#cdd7e1" stroke-width="0.8"/><path d="M1513.6 646.4 L1513.6 525.3" stroke="#cdd7e1" stroke-width="0.8"/><path d="M1513.6 646.4 L1602.9 557.1" stroke="#cdd7e1" stroke-width="0.8"/><path d="M1513.6 646.4 L1640.8 646.4" stroke="#cdd7e1" stroke-width="0.8"/><path d="M1513.6 646.4 L1604.4 737.2" stroke="#cdd7e1" stroke-width="0.8"/><path d="M1513.6 646.4 L1513.6 775.5" stroke="#cdd7e1" stroke-width="0.8"/><path d="M1513.6 646.4 L1421.6 738.4" stroke="#cdd7e1" stroke-width="0.8"/><path d="M1513.6 646.4 L1383.5 646.4" stroke="#cdd7e1" stroke-width="0.8"/><path d="M1513.6 646.4 L1422.3 555.1" stroke="#cdd7e1" stroke-width="0.8"/><path d="M1409.5 569.0 C1409.0 572.5 1406.1 582.0 1406.5 590.0 C1406.9 598.0 1407.6 606.5 1411.9 617.3 C1416.2 628.1 1424.5 645.3 1432.5 655.0 C1440.5 664.7 1451.4 671.0 1459.9 675.5 C1468.5 680.0 1475.0 680.7 1483.8 682.3 C1492.6 683.9 1502.7 685.5 1513.0 685.0 C1523.3 684.5 1535.1 682.3 1545.5 679.0 C1555.9 675.7 1567.3 669.5 1575.2 665.1 C1583.1 660.7 1586.9 659.2 1592.8 652.8 C1598.7 646.3 1606.1 635.2 1610.4 626.4 C1614.7 617.6 1617.0 606.9 1618.5 600.0 C1620.0 593.1 1619.6 590.5 1619.5 585.0 C1619.4 579.5 1618.0 569.9 1617.7 566.9" fill="none" stroke="#111" stroke-width="1.1" stroke-dasharray="4.5 3"/><path d="M1410.2 725.1 C1415.6 727.7 1429.9 736.2 1442.7 740.5 C1455.5 744.8 1475.5 748.9 1487.3 750.8 C1499.1 752.7 1503.9 751.9 1513.6 751.8 C1523.3 751.7 1534.5 751.5 1545.5 750.1 C1556.5 748.7 1567.7 747.4 1579.7 743.3 C1591.7 739.2 1611.2 728.4 1617.5 725.4" fill="none" stroke="#222" stroke-width="1" stroke-dasharray="1 1"/><text x="1513.6" y="506.5" text-anchor="middle" font-family="Liberation Sans" font-size="11" fill="#666">N</text><text x="1623.6" y="547.6" text-anchor="middle" font-family="Liberation Sans" font-size="11" fill="#666">NE</text><text x="1661.9" y="651.0" text-anchor="middle" font-family="Liberation Sans" font-size="11" fill="#666">E</text><text x="1623.6" y="754.0" text-anchor="middle" font-family="Liberation Sans" font-size="11" fill="#666">SE</text><text x="1513.6" y="796.0" text-anchor="middle" font-family="Liberation Sans" font-size="11" fill="#666">S</text><text x="1401.6" y="754.0" text-anchor="middle" font-family="Liberation Sans" font-size="11" fill="#666">SW</text><text x="1363" y="651.0" text-anchor="middle" font-family="Liberation Sans" font-size="11" fill="#666">W</text><text x="1401.6" y="547.6" text-anchor="middle" font-family="Liberation Sans" font-size="11" fill="#666">NW</text><text x="1504.4" y="579.0" text-anchor="middle" font-family="Liberation Sans" font-size="11" fill="#666">45</text><text x="1504.4" y="644.2" text-anchor="middle" font-family="Liberation Sans" font-size="11" fill="#666">90</text><rect x="1358" y="785" width="16" height="11.5" fill="#666"/><text x="1379" y="795.5" font-family="Liberation Sans" font-size="12" fill="#333">Horizon height</text><path d="M1358 805.5 H1374" stroke="#555" stroke-width="1.5" stroke-dasharray="5 3"/><text x="1379" y="809.8" font-family="Liberation Sans" font-size="12" fill="#333">Sun height, June</text><path d="M1358 819.5 H1374" stroke="#555" stroke-width="1.2" stroke-dasharray="1 1"/><text x="1379" y="824" font-family="Liberation Sans" font-size="12" fill="#333">Sun height, December</text></svg>
 <div class="a nw" style="left:811px;top:902px;font-size:14px;line-height:16px;color:#222">Poslední aktualizace : 10. 10. 2025</div>
 <div class="a nw" style="left:1039px;top:902px;font-size:14px;line-height:16px;color:#337ab7">Nahoře</div>
 <!-- page scrollbar -->
 <div class="a" style="left:1905px;top:121px;width:15px;height:911px;background:#fafafa"></div>
 <svg class="a" style="left:1907px;top:124px" width="11" height="9" viewBox="0 0 11 9"><path d="M5.5 1.5 L10 8 H1 Z" fill="#8a8a8a" stroke="#8a8a8a" stroke-width="1" stroke-linejoin="round"/></svg>
 <div class="a" style="left:1908px;top:463px;width:9px;height:550px;border-radius:5px;background:#8a8a8a"></div>
 <svg class="a" style="left:1907px;top:1020px" width="11" height="9" viewBox="0 0 11 9"><path d="M5.5 7.5 L10 1 H1 Z" fill="#8a8a8a" stroke="#8a8a8a" stroke-width="1" stroke-linejoin="round"/></svg>
</div></div>

<div id="taskbar" class="a"><div class="a" style="left:0;top:-1px;width:1920px;height:48px">
 <svg class="a" style="left:18px;top:1046px;top:14px" width="27" height="17" viewBox="0 0 27 17"><defs><linearGradient id="cg" x1="0" y1="0" x2="0" y2="1"><stop offset="0" stop-color="#cfe3fb"/><stop offset="1" stop-color="#8fbdf0"/></linearGradient></defs><path d="M5 16 Q0 16 1 11 Q2 7.5 6.5 8 Q8 2 14.5 2.5 Q20.5 3 21.5 8.5 Q26 9 25.5 13 Q25 16 21 16 Z" fill="url(#cg)" stroke="#7eaee6" stroke-width=".8"/></svg>
 <div class="a" style="left:30px;top:6px;width:16px;height:16px;border-radius:8px;background:#c42b1c;color:#fff;font-size:10.5px;line-height:16px;text-align:center">1</div>
 <div class="a nw" style="left:51px;top:9px;font-size:12px;line-height:14px;color:#1a1a1a">2°C</div>
 <div class="a nw" style="left:51px;top:25px;font-size:12px;line-height:14px;color:#444">Oblačno</div>
 <svg class="a" style="left:705px;top:13px" width="24" height="24" viewBox="0 0 24 24"><defs><linearGradient id="wg" x1="0" y1="0" x2="1" y2="1"><stop offset="0" stop-color="#2bc3f8"/><stop offset="1" stop-color="#0a78d8"/></linearGradient></defs><rect x="0" y="0" width="11.2" height="11.2" fill="url(#wg)"/><rect x="12.8" y="0" width="11.2" height="11.2" fill="url(#wg)"/><rect x="0" y="12.8" width="11.2" height="11.2" fill="url(#wg)"/><rect x="12.8" y="12.8" width="11.2" height="11.2" fill="url(#wg)"/></svg>
 <div class="a" style="left:741px;top:9px;width:219px;height:31px;border-radius:16px;background:#faf3f6;border:1px solid #e2d6da"></div>
 <svg class="a" style="left:751px;top:17px" width="16" height="16" viewBox="0 0 16 16"><circle cx="6.5" cy="6.5" r="5" fill="none" stroke="#1a1a1a" stroke-width="1.6"/><path d="M10.2 10.2 L15 15" stroke="#1a1a1a" stroke-width="1.8"/></svg>
 <div class="a nw" style="left:778px;top:16px;font-size:14.5px;line-height:17px;color:#555">Hledat</div>
 <svg class="a" style="left:972px;top:12px" width="25" height="24" viewBox="0 0 25 24"><rect x="8" y="1" width="16" height="15" rx="1" fill="#e8e8e8" stroke="#cfcfcf" stroke-width=".8"/><rect x="1" y="8" width="16" height="15" rx="1" fill="#1c1c1c"/><rect x="8" y="8" width="9" height="8" fill="#9a9a9a"/></svg>
 <svg class="a" style="left:1016px;top:12px" width="26" height="24" viewBox="0 0 26 24"><path d="M1 3 Q1 1.5 2.5 1.5 H9 L11 4 H24 Q25 4 25 5 V22 Q25 23 24 23 H2 Q1 23 1 22 Z" fill="#f0b429"/><rect x="1" y="6.5" width="24" height="16.5" rx="1" fill="#ffd75e"/><rect x="8" y="15" width="10" height="6" rx="1" fill="#1f6fd1"/></svg>
 <svg class="a" style="left:1060px;top:12px" width="25" height="24" viewBox="0 0 25 24"><circle cx="12.5" cy="12.5" r="11" fill="#1c6fd6"/><path d="M3 9 Q4 3 10 1.5 Q8 5 12 5.5 Q18 5 21 1 Q24 6 23 11 Q22 19 13 21 Q5 21 3 14 Z" fill="#1553b8"/><ellipse cx="12.5" cy="13.5" rx="7" ry="5.5" fill="#cfe3ff"/><path d="M6.5 11.5 L12.5 15 L18.5 11.5" fill="none" stroke="#6fa4e8" stroke-width="1.2"/></svg>
 <svg class="a" style="left:1105px;top:12px" width="23" height="23" viewBox="0 0 23 23"><circle cx="11.5" cy="11.5" r="11" fill="#fff"/><path d="M4 10 Q5 4 12 4 L12 1.5 L18 6 L12 10.5 L12 7.5 Q8 7.5 7 11 Z" fill="#1a4d8f"/><path d="M19 13 Q18 19 11 19 L11 21.5 L5 17 L11 12.5 L11 15.5 Q15 15.5 16 12 Z" fill="#14a3e8"/></svg>
 <div class="a" style="left:1141px;top:5px;width:39px;height:39px;border-radius:5px;background:rgba(255,255,255,.55);border:1px solid rgba(220,210,215,.6)"></div>
 <svg class="a" style="left:1148px;top:12px" width="25" height="25" viewBox="0 0 24 24"><circle cx="12" cy="12" r="11.5" fill="#db4437"/><path d="M12 12 L2.1 6.3 A11.5 11.5 0 0 0 12 23.5 Z" fill="#0f9d58"/><path d="M12 12 L12 23.5 A11.5 11.5 0 0 0 21.96 6.25 L12 6.25 Z" fill="#ffcd40"/><path d="M12 6.25 L21.96 6.25 A11.5 11.5 0 0 0 2.1 6.3 L7 14.9 A5.75 5.75 0 0 1 12 6.25 Z" fill="#db4437"/><circle cx="12" cy="12" r="5.3" fill="#fff"/><circle cx="12" cy="12" r="4.2" fill="#1a73e8"/></svg>
 <div class="a" style="left:1153px;top:40px;width:16px;height:3px;border-radius:2px;background:#0067c0"></div>
 <svg class="a" style="left:1192px;top:10px" width="28" height="26" viewBox="0 0 28 26"><circle cx="18" cy="7" r="3.5" fill="#7b83eb"/><path d="M11 11 H24 Q25.5 11 25.5 12.5 V18 Q25.5 24 18.5 24 Q11 24 11 17 Z" fill="#7b83eb"/><circle cx="11.5" cy="8" r="3" fill="#5059c9"/><rect x="1" y="10" width="13" height="13" rx="1.5" fill="#4b53bc"/><text x="7.5" y="20.5" text-anchor="middle" font-family="Liberation Sans" font-size="10" font-weight="700" fill="#fff">T</text><path d="M22 1 L27.5 10 H16.5 Z" fill="#f8d22a" stroke="#6b5a10" stroke-width=".5"/><path d="M22 4 V7.3" stroke="#222" stroke-width="1.2"/><circle cx="22" cy="8.6" r=".6" fill="#222"/></svg>
 <div class="a" style="left:1202px;top:41px;width:7px;height:3px;border-radius:2px;background:#7a7a7a"></div>
 <svg class="a" style="left:1725px;top:20px" width="12" height="8" viewBox="0 0 12 8"><path d="M1 7 L6 1.5 L11 7" fill="none" stroke="#1a1a1a" stroke-width="1.3"/></svg>
 <svg class="a" style="left:1754px;top:15px" width="18" height="18" viewBox="0 0 18 18"><path d="M2 9 A6.5 6.5 0 0 1 14.5 5.5 M14.5 1.5 V5.5 H10.5" fill="none" stroke="#1a1a1a" stroke-width="1.2"/><path d="M7.5 16 A6.5 6.5 0 0 1 2 11 M1 15.5 L3.5 12.5 L6 15" fill="none" stroke="#1a1a1a" stroke-width="1.2"/><circle cx="11.5" cy="12.5" r="4" fill="#0067c0"/></svg>
 <svg class="a" style="left:1786px;top:15px" width="18" height="18" viewBox="0 0 18 18"><rect x="1" y="1.5" width="11" height="10" rx="1" fill="none" stroke="#1a1a1a" stroke-width="1.1"/><path d="M4 15 H10 M7 11.5 V15" stroke="#1a1a1a" stroke-width="1.1"/><rect x="13" y="1" width="3.5" height="5" rx="1.5" fill="none" stroke="#1a1a1a" stroke-width="1"/><path d="M14.75 6 V16" stroke="#1a1a1a" stroke-width="1"/></svg>
 <svg class="a" style="left:1811px;top:15px" width="16" height="18" viewBox="0 0 16 18"><path d="M1 6.5 H4 L8 3 V15 L4 11.5 H1 Z" fill="none" stroke="#1a1a1a" stroke-width="1.1"/><path d="M10 7 Q11.5 9 10 11" fill="none" stroke="#1a1a1a" stroke-width="1.1"/><path d="M12 5 Q14.5 9 12 13" fill="none" stroke="#aaa" stroke-width="1"/><path d="M14 3.5 Q17 9 14 14.5" fill="none" stroke="#ccc" stroke-width="1"/></svg>
 <div class="a nw" style="left:1801px;top:9px;width:100px;text-align:right;font-size:12px;line-height:14px;color:#1a1a1a">9:30</div>
 <div class="a nw" style="left:1801px;top:25px;width:100px;text-align:right;font-size:12px;line-height:14px;color:#1a1a1a">21.11.2025</div>
</div></div>
</body></html>
